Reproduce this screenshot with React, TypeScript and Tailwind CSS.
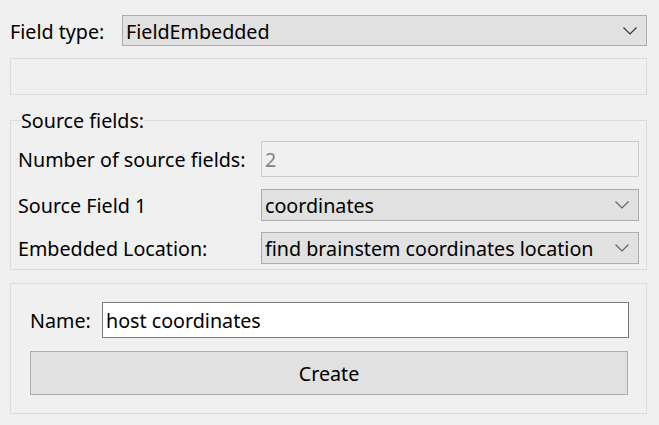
import React from "react";

const Chevron = ({ dark }: { dark?: boolean }) => (
  <svg width="14" height="8" viewBox="0 0 14 8" className="shrink-0">
    <path d="M0.5 0.5 L7 7 L13.5 0.5" fill="none" stroke={dark ? "#333333" : "#606060"} strokeWidth="1.1" />
  </svg>
);

const Combo = ({ text, className, dark }: { text: string; className: string; dark?: boolean }) => (
  <div className={`flex items-center justify-between border border-[#adadad] bg-[#e1e1e1] pl-[3px] pr-[9px] ${className}`}>
    <span className="whitespace-nowrap leading-none pt-[2px]">{text}</span>
    <Chevron dark={dark} />
  </div>
);

export default function App() {
  return (
    <div
      className="w-[659px] h-[425px] bg-[#f0f0f0] text-black text-[19.7px] overflow-hidden"
      style={{ fontFamily: '"Noto Sans", "Open Sans", sans-serif' }}
    >
      <div className="pl-[10px] pt-[15px] flex flex-col">
        <div className="flex items-center h-[31px]">
          <span className="w-[112px] whitespace-nowrap leading-none pt-[2px]">Field type:</span>
          <Combo text="FieldEmbedded" className="w-[525px] h-[31px]" dark />
        </div>
        <div className="mt-[12px] w-[637px] h-[37px] border border-[#dcdcdc]" />
        <div className="relative mt-[25px] w-[637px] h-[150px] border border-[#dcdcdc] pl-[7px] pt-[20px]">
          <span className="absolute left-[10px] top-[-12px] bg-[#f0f0f0] leading-none py-[2px]">Source fields:</span>
          <div className="flex items-center h-[36px]">
            <span className="w-[243px] whitespace-nowrap leading-none pt-[2px]">Number of source fields:</span>
            <div className="w-[378px] h-[36px] border border-[#cccccc] bg-[#f0f0f0] flex items-center pl-[3px] text-[#838383] leading-none pt-[2px]">2</div>
          </div>
          <div className="flex items-center h-[32px] mt-[12px]">
            <span className="w-[243px] whitespace-nowrap leading-none pt-[2px]">Source Field 1</span>
            <Combo text="coordinates" className="w-[378px] h-[32px]" />
          </div>
          <div className="flex items-center h-[32px] mt-[11px]">
            <span className="w-[243px] whitespace-nowrap leading-none pt-[2px]">Embedded Location:</span>
            <Combo text="find brainstem coordinates location" className="w-[378px] h-[32px]" />
          </div>
        </div>
        <div className="mt-[13px] w-[637px] h-[131px] border border-[#dcdcdc] pl-[19px] pt-[18px]">
          <div className="flex items-center h-[36px]">
            <span className="w-[72px] whitespace-nowrap leading-none pt-[2px]">Name:</span>
            <div className="w-[527px] h-[36px] border border-[#7a7a7a] bg-white flex items-center pl-[3px] leading-none pt-[2px]">host coordinates</div>
          </div>
          <div className="mt-[13px] w-[598px] h-[44px] border border-[#adadad] bg-[#e1e1e1] flex items-center justify-center leading-none pt-[2px]">
            Create
          </div>
        </div>
      </div>
    </div>
  );
}
